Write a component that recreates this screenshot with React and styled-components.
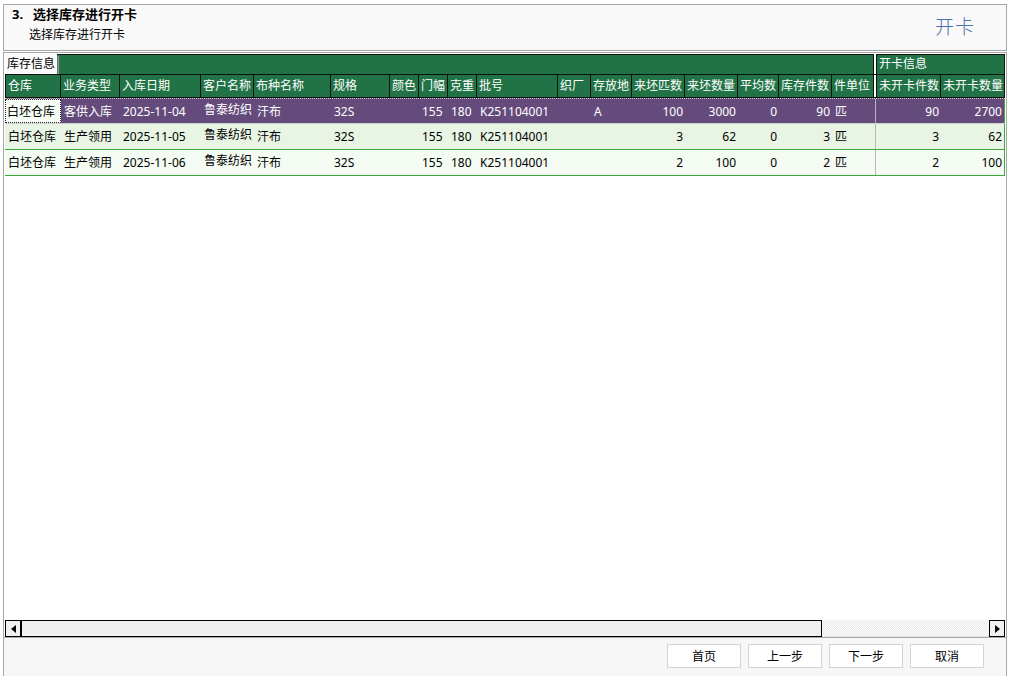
import styled, { createGlobalStyle } from "styled-components";

const GlobalStyle = createGlobalStyle`
  html, body {
    margin: 0;
    padding: 0;
    background: #ffffff;
  }
  * {
    box-sizing: border-box;
  }
`;

const FONT = `"Noto Sans", "Noto Sans CJK SC", sans-serif`;

const GREEN = "#217346";
const PURPLE = "#654b7c";
const LINE = "#3aaa35";

const leftCols = [
  { title: "仓库", w: 56 },
  { title: "业务类型", w: 59 },
  { title: "入库日期", w: 81 },
  { title: "客户名称", w: 53, top: true },
  { title: "布种名称", w: 77 },
  { title: "规格", w: 59 },
  { title: "颜色", w: 29 },
  { title: "门幅", w: 29 },
  { title: "克重", w: 29 },
  { title: "批号", w: 81 },
  { title: "织厂", w: 33 },
  { title: "存放地", w: 41 },
  { title: "来坯匹数", w: 53, right: true },
  { title: "来坯数量", w: 53, right: true },
  { title: "平均数", w: 41, right: true },
  { title: "库存件数", w: 53, right: true },
  { title: "件单位", w: 42 },
];

const rightCols = [
  { title: "未开卡件数", w: 65, right: true },
  { title: "未开卡数量", w: 64, right: true },
];

const template = [
  ...leftCols.map((c) => `${c.w}px`),
  "2px",
  ...rightCols.map((c) => `${c.w}px`),
].join(" ");

const rows = [
  {
    left: ["白坯仓库", "客供入库", "2025-11-04", "鲁泰纺织", "汗布", "32S", "", "155", "180", "K251104001", "", "A", "100", "3000", "0", "90", "匹"],
    right: ["90", "2700"],
  },
  {
    left: ["白坯仓库", "生产领用", "2025-11-05", "鲁泰纺织", "汗布", "32S", "", "155", "180", "K251104001", "", "", "3", "62", "0", "3", "匹"],
    right: ["3", "62"],
  },
  {
    left: ["白坯仓库", "生产领用", "2025-11-06", "鲁泰纺织", "汗布", "32S", "", "155", "180", "K251104001", "", "", "2", "100", "0", "2", "匹"],
    right: ["2", "100"],
  },
];

const Page = styled.div`
  width: 1012px;
  height: 676px;
  padding: 4px 5px 0 3px;
  display: flex;
  flex-direction: column;
  font-family: ${FONT};
  font-size: 12px;
  color: #000;
  overflow: hidden;
`;

const HeaderPanel = styled.div`
  height: 47px;
  border: 1px solid #a8a8a8;
  background: #f9f9f9;
  display: flex;
  justify-content: space-between;
  align-items: center;
  padding: 0 31px 0 8px;
`;

const Titles = styled.div`
  align-self: flex-start;
  display: flex;
  flex-direction: column;
  gap: 4px;
  padding-top: 1px;
`;

const Title = styled.div`
  font-size: 13px;
  font-weight: 700;
  line-height: 17px;
  display: flex;
`;

const StepNo = styled.span`
  width: 21px;
`;

const Subtitle = styled.div`
  font-size: 12px;
  line-height: 16px;
  padding-left: 17px;
`;

const ActionLabel = styled.div`
  font-size: 19px;
  font-weight: 300;
  color: #4a70ad;
  letter-spacing: 1px;
  padding-bottom: 3px;
`;

const GridPanel = styled.div`
  margin-top: 1px;
  flex: 1;
  border: 1px solid #a8a8a8;
  padding: 1px 1px 0 1px;
  display: flex;
  flex-direction: column;
  background: #fff;
`;

const GroupBand = styled.div`
  display: grid;
  grid-template-columns: 869px 2px 129px;
  height: 20px;
`;

const Group = styled.div`
  background: ${GREEN};
  border: 1px solid #111;
  border-bottom: none;
  display: flex;
  align-items: stretch;
  color: #fff;
  line-height: 18px;
  padding-left: ${(p) => p.$pad || 0}px;
`;

const Tab = styled.div`
  background: #fafafa;
  color: #000;
  padding: 0 2px;
  margin: -1px 0 0 -1px;
  height: 20px;
  line-height: 19px;
  box-shadow: 1px 1px 0 #6a6a6a, 2px 2px 0 #9a9a9a;
`;

const Row = styled.div`
  display: grid;
  grid-template-columns: ${template};
  height: ${(p) => p.$h}px;
`;

const HeadCell = styled.div`
  background: ${(p) => (p.$gap ? "#fff" : GREEN)};
  color: #fff;
  border-top: 1px solid #111;
  border-bottom: 1px solid #111;
  border-left: ${(p) => (p.$first ? "1px solid #111" : "none")};
  border-right: ${(p) => (p.$gap ? "none" : "1px solid #111")};
  padding: 0 2px;
  line-height: 22px;
  white-space: nowrap;
  overflow: hidden;
`;

const DataRow = styled(Row)`
  background: ${(p) => p.$bg};
  color: ${(p) => (p.$selected ? "#fff" : "#000")};
  border-bottom: 1px solid ${(p) => (p.$selected ? "#cfcfcf" : LINE)};
  border-top: ${(p) => (p.$selected ? "1px dotted #cfcfcf" : "none")};
`;

const Cell = styled.div`
  padding: ${(p) => (p.$top ? "2px" : "0")} ${(p) => (p.$right ? "2px" : "3px")} 0
    ${(p) => (p.$right ? "0" : "3px")};
  text-align: ${(p) => (p.$right ? "right" : "left")};
  line-height: ${(p) => (p.$top ? "17px" : "25px")};
  white-space: nowrap;
  overflow: hidden;
  border-right: ${(p) => (p.$edge ? `1px solid ${LINE}` : "none")};
`;

const FocusCell = styled(Cell)`
  background: #f6fdf4;
  color: #000;
  border: 1px dotted #222;
  padding-left: 1px;
  line-height: 23px;
`;

const Divider = styled.div`
  border-right: 1px solid #b8b8b8;
`;

const Filler = styled.div`
  flex: 1;
`;

const ScrollBar = styled.div`
  height: 17px;
  display: flex;
`;

const ArrowBtn = styled.div`
  width: ${(p) => p.$w}px;
  border: 1px solid #000;
  border-right-width: ${(p) => (p.$left ? 2 : 1)}px;
  background: #f0f0f0;
  display: flex;
  align-items: center;
  justify-content: center;

  &::before {
    content: "";
    width: 0;
    height: 0;
    border-top: 4px solid transparent;
    border-bottom: 4px solid transparent;
    ${(p) =>
      p.$left ? "border-right: 5px solid #000;" : "border-left: 5px solid #000;"}
  }
`;

const Thumb = styled.div`
  width: 800px;
  border: 1px solid #000;
  border-left: none;
  background: #f0f0f0;
`;

const Track = styled.div`
  flex: 1;
  background: repeating-conic-gradient(#ececec 0 25%, #fafafa 0 50%) 0 0 / 2px 2px;
  border-bottom: 1px solid #e0e0e0;
`;

const Footer = styled.div`
  height: 38px;
  background: #f7f7f7;
  border-left: 1px solid #a8a8a8;
  border-right: 1px solid #a8a8a8;
  display: flex;
  justify-content: flex-end;
  align-items: flex-start;
  padding: 6px 22px 0 0;
  gap: 7px;
`;

const Button = styled.button`
  width: 74px;
  height: 24px;
  background: #fff;
  border: 1px solid #d4d4d4;
  font-family: ${FONT};
  font-size: 12px;
  color: #000;
  padding: 0;
  cursor: pointer;
`;

const App = () => {
  return (
    <>
      <GlobalStyle />
      <Page>
        <HeaderPanel>
          <Titles>
            <Title>
              <StepNo>3.</StepNo>
              选择库存进行开卡
            </Title>
            <Subtitle>选择库存进行开卡</Subtitle>
          </Titles>
          <ActionLabel>开卡</ActionLabel>
        </HeaderPanel>

        <GridPanel>
          <GroupBand>
            <Group>
              <Tab>库存信息</Tab>
            </Group>
            <div />
            <Group $pad={2}>开卡信息</Group>
          </GroupBand>

          <Row $h={24}>
            {leftCols.map((c, i) => (
              <HeadCell key={c.title} $first={i === 0}>
                {c.title}
              </HeadCell>
            ))}
            <HeadCell $gap />
            {rightCols.map((c, i) => (
              <HeadCell key={c.title} $first={i === 0}>
                {c.title}
              </HeadCell>
            ))}
          </Row>

          {rows.map((r, ri) => {
            const selected = ri === 0;
            const bg = selected ? PURPLE : ri === 1 ? "#e8f5e4" : "#f4fbf2";
            return (
              <DataRow key={ri} $h={26} $bg={bg} $selected={selected}>
                {r.left.map((v, i) =>
                  selected && i === 0 ? (
                    <FocusCell key={i}>{v}</FocusCell>
                  ) : (
                    <Cell key={i} $right={leftCols[i].right} $top={leftCols[i].top}>
                      {v}
                    </Cell>
                  )
                )}
                <Divider />
                {r.right.map((v, i) => (
                  <Cell key={i} $right $edge={i === r.right.length - 1}>
                    {v}
                  </Cell>
                ))}
              </DataRow>
            );
          })}

          <Filler />

          <ScrollBar>
            <ArrowBtn $w={17} $left />
            <Thumb />
            <Track />
            <ArrowBtn $w={16} />
          </ScrollBar>
        </GridPanel>

        <Footer>
          <Button>首页</Button>
          <Button>上一步</Button>
          <Button>下一步</Button>
          <Button>取消</Button>
        </Footer>
      </Page>
    </>
  );
};

export default App;
